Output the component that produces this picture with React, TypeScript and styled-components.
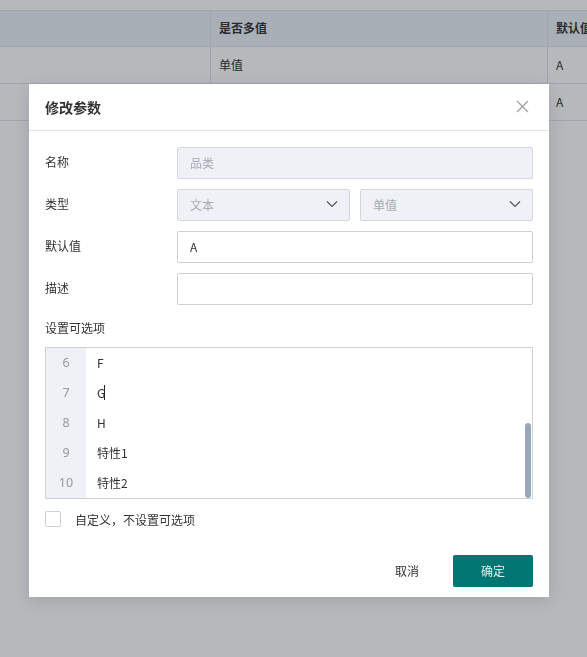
import React from "react";
import styled, { createGlobalStyle } from "styled-components";

const Global = createGlobalStyle`
  html, body { margin: 0; padding: 0; }
  body {
    font-family: "Noto Sans CJK SC", "Noto Sans", sans-serif;
    font-size: 12px;
    color: #333;
    background: #fff;
    width: 587px;
    height: 657px;
    overflow: hidden;
  }
  * { box-sizing: border-box; }
`;

const Page = styled.div`
  width: 587px;
  height: 657px;
  background: #fff;
  padding-top: 10px;
  overflow: hidden;
`;

const Table = styled.div`
  display: grid;
  grid-template-columns: 210px 337px 120px;
  width: 667px;
`;

const Cell = styled.div<{ $head?: boolean }>`
  height: 37px;
  display: flex;
  align-items: center;
  padding: 0 8px 2px;
  background: ${(p) => (p.$head ? "#ecf2f9" : "#fff")};
  border-top: ${(p) => (p.$head ? "1px solid #dce4ec" : "none")};
  border-bottom: 1px solid #dce4ec;
  border-left: 1px solid #dce4ec;
  font-weight: ${(p) => (p.$head ? 600 : 400)};
  color: #333;
  white-space: nowrap;
  overflow: hidden;
  &:nth-child(3n + 1) { border-left: none; }
`;

const Mask = styled.div`
  position: fixed;
  inset: 0;
  background: rgba(20, 25, 35, 0.31);
`;

const Dialog = styled.div`
  position: fixed;
  left: 29px;
  top: 84px;
  width: 520px;
  background: #fff;
  box-shadow: 0 4px 16px rgba(0, 0, 0, 0.12);
  display: flex;
  flex-direction: column;
`;

const Header = styled.div`
  height: 47px;
  display: flex;
  align-items: center;
  justify-content: space-between;
  padding: 0 20px 1px 16px;
  border-bottom: 1px solid #dde2e8;
`;

const Title = styled.div`
  font-size: 14px;
  font-weight: 600;
  color: #333;
`;

const CloseBtn = styled.button`
  border: none;
  background: none;
  padding: 0;
  width: 14px;
  height: 14px;
  display: flex;
  align-items: center;
  justify-content: center;
  cursor: pointer;
`;

const Body = styled.div`
  padding: 16px 16px 0;
  display: flex;
  flex-direction: column;
`;

const FormRow = styled.div`
  display: flex;
  align-items: center;
  height: 32px;
  margin-bottom: 10px;
`;

const Label = styled.div`
  width: 132px;
  flex: none;
  color: #333;
  padding-bottom: 3px;
`;

const Field = styled.div<{ $disabled?: boolean }>`
  flex: 1;
  height: 32px;
  border: 1px solid ${(p) => (p.$disabled ? "#d3d8df" : "#ccd2da")};
  border-radius: 2px;
  background: ${(p) => (p.$disabled ? "#eff1f6" : "#fff")};
  color: ${(p) => (p.$disabled ? "#a6abb3" : "#333")};
  display: flex;
  align-items: center;
  justify-content: space-between;
  padding: 0 11px 2px 12px;
`;

const Selects = styled.div`
  flex: 1;
  display: flex;
  gap: 10px;
`;

const SectionLabel = styled.div`
  margin-top: 3px;
  line-height: 20px;
  color: #333;
`;

const Editor = styled.div`
  margin-top: 9px;
  height: 152px;
  border: 1px solid #ccd2da;
  position: relative;
  display: flex;
  overflow: hidden;
`;

const Gutter = styled.div`
  width: 40px;
  background: #eff1f6;
  display: flex;
  flex-direction: column;
`;

const LineNo = styled.div`
  height: 30px;
  line-height: 30px;
  text-align: center;
  color: #999;
  font-family: "Noto Sans", "Noto Sans CJK SC", sans-serif;
  font-size: 12.5px;
`;

const Lines = styled.div`
  flex: 1;
  display: flex;
  flex-direction: column;
  padding-left: 11px;
`;

const Line = styled.div`
  height: 30px;
  color: #333;
  font-size: 12px;
  display: flex;
  align-items: center;
  padding-bottom: 1px;
`;

const Caret = styled.span`
  display: inline-block;
  width: 1px;
  height: 15px;
  background: #222;
  margin-left: -1px;
`;

const Scrollbar = styled.div`
  position: absolute;
  right: 1px;
  top: 75px;
  width: 6px;
  height: 75px;
  border-radius: 3px;
  background: #98a8b8;
`;

const CheckRow = styled.label`
  margin-top: 12px;
  display: flex;
  align-items: center;
  gap: 14px;
  height: 16px;
  color: #333;
`;

const Box = styled.span`
  width: 16px;
  height: 16px;
  border: 1px solid #ccd2da;
  border-radius: 2px;
  background: #fff;
`;

const Footer = styled.div`
  display: flex;
  justify-content: flex-end;
  gap: 6px;
  padding: 28px 16px 10px;
`;

const Button = styled.button<{ $primary?: boolean }>`
  width: 80px;
  height: 32px;
  border: none;
  border-radius: 2px;
  font-family: inherit;
  font-size: 12px;
  padding: 0 0 2px;
  background: ${(p) => (p.$primary ? "#007672" : "transparent")};
  color: ${(p) => (p.$primary ? "#e6f2f1" : "#333")};
  cursor: pointer;
`;

const Chevron = () => (
  <svg width="12" height="8" viewBox="0 0 12 8" fill="none">
    <path d="M1 1.5 L6 6.5 L11 1.5" stroke="#555" strokeWidth="1.2" />
  </svg>
);

const CloseIcon = () => (
  <svg width="13" height="13" viewBox="0 0 13 13" fill="none">
    <path d="M1 1 L12 12 M12 1 L1 12" stroke="#a0a0a0" strokeWidth="1.3" />
  </svg>
);

const options = [
  { n: 6, t: "F" },
  { n: 7, t: "G", caret: true },
  { n: 8, t: "H" },
  { n: 9, t: "特性1" },
  { n: 10, t: "特性2" },
];

export default function App() {
  return (
    <>
      <Global />
      <Page>
        <Table>
          <Cell $head></Cell>
          <Cell $head>是否多值</Cell>
          <Cell $head>默认值</Cell>
          <Cell></Cell>
          <Cell>单值</Cell>
          <Cell>A</Cell>
          <Cell></Cell>
          <Cell>单值</Cell>
          <Cell>A</Cell>
        </Table>
      </Page>
      <Mask />
      <Dialog>
        <Header>
          <Title>修改参数</Title>
          <CloseBtn aria-label="close">
            <CloseIcon />
          </CloseBtn>
        </Header>
        <Body>
          <FormRow>
            <Label>名称</Label>
            <Field $disabled>品类</Field>
          </FormRow>
          <FormRow>
            <Label>类型</Label>
            <Selects>
              <Field $disabled>
                文本
                <Chevron />
              </Field>
              <Field $disabled>
                单值
                <Chevron />
              </Field>
            </Selects>
          </FormRow>
          <FormRow>
            <Label>默认值</Label>
            <Field>A</Field>
          </FormRow>
          <FormRow>
            <Label>描述</Label>
            <Field />
          </FormRow>
          <SectionLabel>设置可选项</SectionLabel>
          <Editor>
            <Gutter>
              {options.map((o) => (
                <LineNo key={o.n}>{o.n}</LineNo>
              ))}
            </Gutter>
            <Lines>
              {options.map((o) => (
                <Line key={o.n}>
                  {o.t}
                  {o.caret && <Caret />}
                </Line>
              ))}
            </Lines>
            <Scrollbar />
          </Editor>
          <CheckRow>
            <Box />
            自定义，不设置可选项
          </CheckRow>
        </Body>
        <Footer>
          <Button>取消</Button>
          <Button $primary>确定</Button>
        </Footer>
      </Dialog>
    </>
  );
}
